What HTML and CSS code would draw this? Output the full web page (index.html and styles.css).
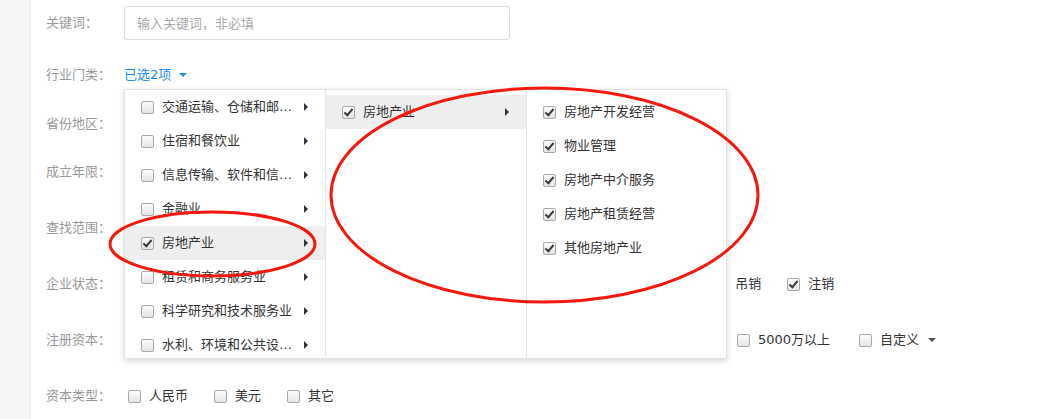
FILE: index.html
```html
<!DOCTYPE html>
<html>
<head>
    <meta charset="utf-8">
    <title>企业筛选</title>
    <link rel="stylesheet" href="styles.css">
</head>
<body>
    <div class="page">
        <aside class="side"></aside>
        <main class="main">
            <div class="form">
                <div class="form-row form-row--top">
                    <span class="form-label">关键词：</span>
                    <input class="keyword" type="text" placeholder="输入关键词，非必填">
                </div>

                <div class="form-row form-row--industry">
                    <span class="form-label">行业门类：</span>
                    <span class="picker">已选2项<i class="caret caret--blue"></i></span>

                    <div class="cascader">
                        <ul class="cascader-col cascader-col--scrolled">
                            <li class="cascader-item"><span class="cb"></span><span class="item-text">交通运输、仓储和邮政业</span><i class="arrow"></i></li>
                            <li class="cascader-item"><span class="cb"></span><span class="item-text">住宿和餐饮业</span><i class="arrow"></i></li>
                            <li class="cascader-item"><span class="cb"></span><span class="item-text">信息传输、软件和信息技术服务业</span><i class="arrow"></i></li>
                            <li class="cascader-item"><span class="cb"></span><span class="item-text">金融业</span><i class="arrow"></i></li>
                            <li class="cascader-item is-active"><span class="cb is-checked"></span><span class="item-text">房地产业</span><i class="arrow"></i></li>
                            <li class="cascader-item"><span class="cb"></span><span class="item-text">租赁和商务服务业</span><i class="arrow"></i></li>
                            <li class="cascader-item"><span class="cb"></span><span class="item-text">科学研究和技术服务业</span><i class="arrow"></i></li>
                            <li class="cascader-item"><span class="cb"></span><span class="item-text">水利、环境和公共设施管理业</span><i class="arrow"></i></li>
                        </ul>
                        <ul class="cascader-col">
                            <li class="cascader-item is-active"><span class="cb is-checked"></span><span class="item-text">房地产业</span><i class="arrow"></i></li>
                        </ul>
                        <ul class="cascader-col cascader-col--last">
                            <li class="cascader-item"><span class="cb is-checked"></span><span class="item-text">房地产开发经营</span></li>
                            <li class="cascader-item"><span class="cb is-checked"></span><span class="item-text">物业管理</span></li>
                            <li class="cascader-item"><span class="cb is-checked"></span><span class="item-text">房地产中介服务</span></li>
                            <li class="cascader-item"><span class="cb is-checked"></span><span class="item-text">房地产租赁经营</span></li>
                            <li class="cascader-item"><span class="cb is-checked"></span><span class="item-text">其他房地产业</span></li>
                        </ul>
                    </div>
                </div>

                <div class="form-row">
                    <span class="form-label">省份地区：</span>
                </div>

                <div class="form-row form-row--tight">
                    <span class="form-label">成立年限：</span>
                </div>

                <div class="form-row form-row--wide">
                    <span class="form-label">查找范围：</span>
                </div>

                <div class="form-row form-row--wide">
                    <span class="form-label">企业状态：</span>
                    <div class="opts">
                        <label class="opt"><span class="cb"></span>在业</label>
                        <label class="opt"><span class="cb"></span>存续</label>
                        <label class="opt"><span class="cb"></span>迁入</label>
                        <label class="opt"><span class="cb"></span>迁出</label>
                        <label class="opt"><span class="cb"></span>停业</label>
                        <label class="opt"><span class="cb"></span>清算</label>
                        <label class="opt"><span class="cb"></span>撤销</label>
                        <label class="opt"><span class="cb"></span>歇业</label>
                        <label class="opt opt--status"><span class="cb"></span>吊销</label>
                        <label class="opt"><span class="cb is-checked"></span>注销</label>
                    </div>
                </div>

                <div class="form-row form-row--wide">
                    <span class="form-label">注册资本：</span>
                    <div class="opts">
                        <label class="opt"><span class="cb"></span>100万以下</label>
                        <label class="opt"><span class="cb"></span>100-200万</label>
                        <label class="opt"><span class="cb"></span>200-500万</label>
                        <label class="opt"><span class="cb"></span>500-1000万</label>
                        <label class="opt opt--wide"><span class="cb"></span>1000万-5000万</label>
                        <label class="opt opt--wide"><span class="cb"></span>5000万以上</label>
                        <label class="opt"><span class="cb"></span>自定义<i class="caret caret--dark"></i></label>
                    </div>
                </div>

                <div class="form-row form-row--wide">
                    <span class="form-label">资本类型：</span>
                    <div class="opts">
                        <label class="opt"><span class="cb"></span>人民币</label>
                        <label class="opt"><span class="cb"></span>美元</label>
                        <label class="opt"><span class="cb"></span>其它</label>
                    </div>
                </div>
            </div>
        </main>
    </div>

    <!-- red hand-drawn marks on top of the screenshot -->
    <svg class="marks" width="1063" height="419" viewBox="0 0 1063 419">
        <ellipse cx="212.5" cy="244" rx="102.5" ry="32"></ellipse>
        <ellipse cx="544.5" cy="195" rx="213.5" ry="107"></ellipse>
    </svg>
</body>
</html>
```

FILE: styles.css
```css
:root {
    --label: #999;
    --text: #333;
    --blue: #1e8cf0;
    --line: #e6e6e6;
    --hover: #eeeeee;
    --mark: #f4190f;
}

* {
    box-sizing: border-box;
}

body {
    margin: 0;
    background: #fff;
    color: var(--text);
    font-family: "DejaVu Sans", "Noto Sans CJK SC", sans-serif;
    font-size: 13px;
    line-height: 20px;
    overflow: hidden;
}

.page {
    display: flex;
    min-height: 419px;
}

.side {
    width: 31px;
    flex: none;
    background: #f5f5f5;
    border-right: 1px solid #ececec;
}

.main {
    flex: 1;
    padding: 6px 15px 0;
}

.form {
    display: flex;
    flex-direction: column;
}

.form-row {
    display: flex;
    align-items: center;
    height: 34px;
    margin-top: 15px;
}

.form-row--top {
    margin-top: 0;
}

.form-row--industry {
    position: relative;
    margin-top: 18px;
}

.form-row--tight {
    margin-top: 14px;
}

.form-row--wide {
    margin-top: 22px;
}

.form-label {
    width: 78px;
    flex: none;
    color: var(--label);
}

.keyword {
    width: 386px;
    height: 34px;
    padding: 0 12px;
    border: 1px solid #dcdcdc;
    border-radius: 3px;
    font: inherit;
    color: var(--text);
    outline: none;
}

.keyword::placeholder {
    color: #a9a9a9;
}

.picker {
    display: inline-flex;
    align-items: center;
    color: var(--blue);
}

.caret {
    display: inline-block;
    width: 0;
    height: 0;
    margin-left: 8px;
    border-left: 4px solid transparent;
    border-right: 4px solid transparent;
    border-top: 4px solid currentColor;
}

.caret--blue {
    color: var(--blue);
}

.caret--dark {
    margin-left: 9px;
    color: #555;
}

/* checkbox */
.cb {
    position: relative;
    display: inline-block;
    flex: none;
    width: 13px;
    height: 13px;
    margin: 0 8px 0 4px;
    border: 1px solid #a8a8a8;
    border-radius: 2px;
    background: linear-gradient(#fcfcfc, #e4e4e4);
}

.cb.is-checked::after {
    content: "";
    position: absolute;
    left: 3px;
    top: 0;
    width: 3px;
    height: 7px;
    border-right: 2px solid #3a3a3a;
    border-bottom: 2px solid #3a3a3a;
    transform: rotate(40deg);
}

.opts {
    display: flex;
    align-items: center;
    white-space: nowrap;
}

.opt {
    display: inline-flex;
    align-items: center;
    margin-right: 22px;
}

.opt--status {
    margin-left: 2px;
}

.opt--wide {
    margin-right: 25px;
}

/* cascader dropdown */
.cascader {
    position: absolute;
    top: 31px;
    left: 78px;
    z-index: 2;
    display: flex;
    height: 270px;
    background: #fff;
    border: 1px solid #e2e2e2;
    box-shadow: 0 2px 6px rgba(0, 0, 0, 0.16);
    overflow: hidden;
}

.cascader-col {
    width: 201px;
    margin: 0;
    padding: 5px 0 0;
    list-style: none;
    border-right: 1px solid var(--line);
}

.cascader-col--scrolled {
    padding-top: 0;
}

.cascader-col--last {
    width: 199px;
    border-right: none;
}

.cascader-item {
    display: flex;
    align-items: center;
    height: 34px;
    padding: 0 17px 0 12px;
}

.cascader-item.is-active {
    background: var(--hover);
}

.item-text {
    max-width: 133px;
    overflow: hidden;
    white-space: nowrap;
    text-overflow: ellipsis;
}

.arrow {
    margin-left: auto;
    width: 0;
    height: 0;
    border-top: 4px solid transparent;
    border-bottom: 4px solid transparent;
    border-left: 4px solid #2d3440;
}

.marks {
    position: absolute;
    top: 0;
    left: 0;
    pointer-events: none;
    z-index: 5;
}

.marks ellipse {
    fill: none;
    stroke: var(--mark);
    stroke-width: 3;
}
```
